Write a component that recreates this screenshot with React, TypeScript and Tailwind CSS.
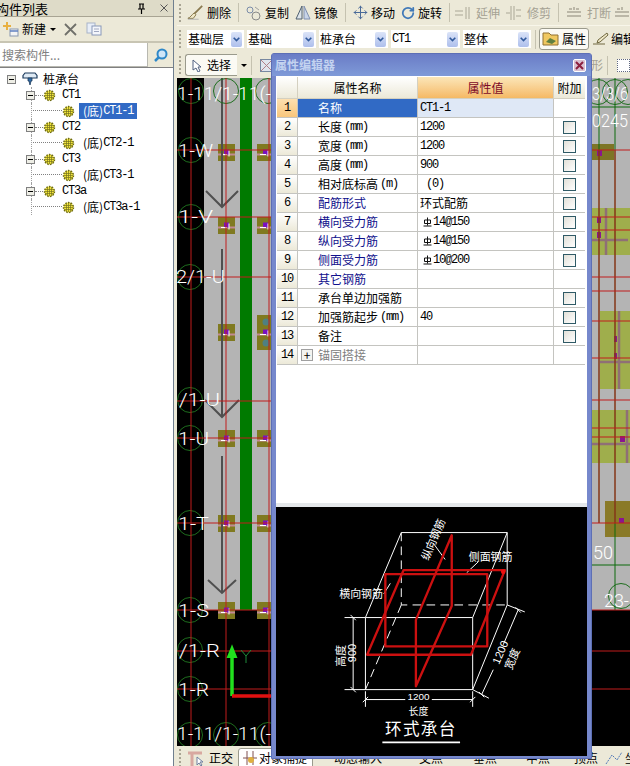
import { Move, RotateCw } from 'lucide-react';

const sans = "font-['Noto_Sans_CJK_SC','Noto_Sans_CJK_JP',sans-serif]";
const mono = "font-['Liberation_Mono',monospace] text-[12px] tracking-[-1.2px]";

const tree = [
  { label: '桩承台', depth: 0 },
  { label: 'CT1', depth: 1 },
  { label: '(底)CT1-1', depth: 2, selected: true },
  { label: 'CT2', depth: 1 },
  { label: '(底)CT2-1', depth: 2 },
  { label: 'CT3', depth: 1 },
  { label: '(底)CT3-1', depth: 2 },
  { label: 'CT3a', depth: 1 },
  { label: '(底)CT3a-1', depth: 2 },
];

const rows = [
  { name: '名称', value: 'CT1-1', check: false },
  { name: '长度', unit: '(mm)', value: '1200', check: true },
  { name: '宽度', unit: '(mm)', value: '1200', check: true },
  { name: '高度', unit: '(mm)', value: '900', check: true },
  { name: '相对底标高', unit: '(m)', value: ' (0)', check: true },
  { name: '配筋形式', value: '环式配筋', check: true, blue: true, cjk: true },
  { name: '横向受力筋', value: '14@150', check: true, blue: true, rebar: true },
  { name: '纵向受力筋', value: '14@150', check: true, blue: true, rebar: true },
  { name: '侧面受力筋', value: '10@200', check: true, blue: true, rebar: true },
  { name: '其它钢筋', value: '', check: false, blue: true },
  { name: '承台单边加强筋', value: '', check: true },
  { name: '加强筋起步', unit: '(mm)', value: '40', check: true },
  { name: '备注', value: '', check: true },
  { name: '锚固搭接', value: '', check: false, group: true },
];

function Grip() {
  return <div className="w-[3px] h-[18px] mx-[2px] shrink-0 border-l-2 border-dotted border-[#a8a493]" />;
}

function Sep() {
  return <div className="w-px h-[19px] mx-[4px] shrink-0 bg-[#c5c2b0]" />;
}

function Gear() {
  return (
    <svg width="13" height="13" viewBox="0 0 13 13" className="shrink-0">
      <circle cx="6.5" cy="6.5" r="5" fill="#f3e63c" stroke="#6d6a12" strokeWidth="1.4" strokeDasharray="1.6 1.2" />
      <path d="M2 4.5h9M2 6.5h9M2 8.5h9M4.5 2v9M6.5 2v9M8.5 2v9" stroke="#75721c" strokeWidth="0.7" />
    </svg>
  );
}

function Expander({ sign = true }: { sign?: boolean }) {
  return (
    <span className="w-[9px] h-[9px] shrink-0 border border-[#808080] bg-[#eeeee6] flex items-center justify-center relative z-10">
      <span className="w-[5px] h-px bg-black" />
      {!sign && <span className="absolute w-px h-[5px] bg-black" />}
    </span>
  );
}

function TreeRow({ label, depth, selected }: { label: string; depth: number; selected?: boolean }) {
  return (
    <div className="h-[16px] flex items-center relative">
      {depth === 0 && (
        <div className="flex items-center pl-[7px]">
          <Expander />
          <svg width="16" height="14" viewBox="0 0 16 14" className="ml-[6px] shrink-0">
            <path d="M1 3.5 3 1h10l2 2.5V6H1z" fill="#dfeaf4" stroke="#1c3a5c" strokeWidth="1.2" />
            <path d="M6 6h4v3H9l-1 4-1-4H6z" fill="#2f6ca8" stroke="#1c3a5c" strokeWidth="0.8" />
          </svg>
          <span className="ml-[5px] text-[12px] leading-none text-black">{label}</span>
        </div>
      )}
      {depth === 1 && (
        <div className="flex items-center pl-[26px]">
          <Expander />
          <span className="w-[8px] border-t border-dotted border-[#808080]" />
          <Gear />
          <span className={`ml-[6px] text-black ${mono}`}>{label}</span>
        </div>
      )}
      {depth === 2 && (
        <div className="flex items-center pl-[31px]">
          <span className="w-[31px] h-[8px] -mt-[8px] border-l border-b border-dotted border-[#808080] shrink-0" />
          <Gear />
          <span className={`ml-[4px] h-[16px] px-[4px] flex items-center ${selected ? 'bg-[#316ac5] text-white' : 'text-black'}`}>
            <span className="text-[12px]">(底)</span>
            <span className={mono}>{label.slice(3)}</span>
          </span>
        </div>
      )}
      {depth > 0 && (
        <span className="absolute left-[31px] top-0 bottom-0 border-l border-dotted border-[#a0a0a0]" />
      )}
    </div>
  );
}

function Tool({ icon, label, dim }: { icon: React.ReactNode; label: string; dim?: boolean }) {
  return (
    <div className={`flex items-center gap-[3px] shrink-0 px-[3px] text-[12px] ${dim ? 'text-[#a5a294]' : 'text-black'}`}>
      {icon}
      <span>{label}</span>
    </div>
  );
}

function ComboBox({ text, w, latin }: { text: string; w: string; latin?: boolean }) {
  return (
    <div className={`h-[18px] flex items-center justify-between bg-white pl-[1px] pr-[2px] mr-[3px] shrink-0 ${w}`}>
      <span className={latin ? mono : 'text-[12px]'}>{text}</span>
      <span className="w-[11px] h-[15px] rounded-[2px] bg-gradient-to-b from-[#dbe4f8] to-[#aebfec] flex items-center justify-center">
        <svg width="7" height="5" viewBox="0 0 7 5">
          <path d="M.7.7 3.5 3.6 6.3.7" fill="none" stroke="#315a9c" strokeWidth="1.6" />
        </svg>
      </span>
    </div>
  );
}

function Checkbox() {
  return <span className="w-[13px] h-[13px] border border-[#2f5a66] bg-gradient-to-br from-[#e2e0d8] to-white block" />;
}

function RebarGlyph() {
  return (
    <svg width="9" height="10" viewBox="0 0 9 10" className="inline-block mr-[1px]">
      <path d="M1.5 3h6v3.500h-6zM4.500.5v8M.5 9h8" fill="none" stroke="#111" strokeWidth="1" />
    </svg>
  );
}

function PropertyGrid() {
  return (
    <div className="ml-px mt-px grid grid-cols-[21px_120px_136px_31px] text-[12px] text-black">
      <div className="h-[22px] bg-gradient-to-b from-white to-[#ece9d8] border-r border-b border-[#d4d0c0]" />
      <div className="h-[22px] flex items-center justify-center bg-gradient-to-b from-white to-[#ece9d8] border-r border-b border-[#d4d0c0]">属性名称</div>
      <div className="h-[22px] flex items-center justify-center bg-gradient-to-b from-[#fbe6b8] to-[#f5b964] border-r border-b border-[#d4d0c0] text-[#7c0a28]">属性值</div>
      <div className="h-[22px] flex items-center justify-center bg-gradient-to-b from-white to-[#ece9d8] border-b border-[#d4d0c0]">附加</div>
      {rows.map((r, i) => (
        <div key={r.name} className="contents">
          <div className={`h-[19px] flex items-center justify-center border-r border-b border-[#c4c4c0] ${mono} ${i === 0 ? 'bg-gradient-to-b from-[#fde0b0] to-[#f8c67c]' : 'bg-gradient-to-b from-white to-[#ece9d8]'}`}>
            {i + 1}
          </div>
          <div className={`h-[19px] flex items-center border-r border-b border-[#c4c4c0] relative pl-[20px] ${i === 0 ? 'bg-[#316ac5] text-white' : r.group ? 'text-[#808080]' : r.blue ? 'text-[#10108c]' : ''}`}>
            {r.group && (
              <span className="absolute left-[3px] top-[3px] w-[12px] h-[12px] border border-[#a0a0a0] bg-[#f4f4f0] flex items-center justify-center text-black text-[12px] leading-none">+</span>
            )}
            <span>{r.name}</span>
            {r.unit && <span className={`ml-[2px] ${mono}`}>{r.unit}</span>}
          </div>
          <div className={`h-[19px] flex items-center border-r border-b border-[#c4c4c0] pl-[2px] whitespace-pre ${i === 0 ? 'bg-[#dfe8f6]' : ''}`}>
            {r.rebar && <span className="w-[3px]" />}
            {r.rebar && <RebarGlyph />}
            <span className={r.cjk ? '' : mono}>{r.value}</span>
          </div>
          <div className="h-[19px] flex items-center justify-center border-b border-[#c4c4c0]">
            {r.check && <Checkbox />}
          </div>
        </div>
      ))}
    </div>
  );
}

function RingCapDiagram() {
  const t = { fill: '#fff', fontSize: 33, fontFamily: "'Noto Sans CJK SC', sans-serif" };
  return (
    <svg viewBox="18 20 932 750" className="w-full h-full block">
      <g stroke="#fff" strokeWidth="3" fill="none">
        <path d="M285 353H608V570H285zM393 97H712L608 353M393 97 285 353M712 97V315L608 570" />
        <path d="M393 97V315H712M393 315 285 570" strokeDasharray="26 16" />
        <path d="M222 353H285M222 570H285M248 353V570M240 345l16 16M240 562l16 16" />
        <path d="M285 575V622M608 575V622M285 600H405M485 600H608M277 608l16-16M600 608l16-16" />
        <path d="M712 315 765 336M608 570 657 596M745 330 700 435M670 510 635 585M737 322l16 16M627 577l16 16" />
        <path d="M340 282 360 250M490 130 525 178M590 218 625 185" />
      </g>
      <g stroke="#cc1010" strokeWidth="7" fill="none" strokeLinejoin="round">
        <path d="M345 222H652V440H345z" />
        <path d="M400 210H705L603 465H290z" />
        <path d="M545 105V318L437 560V360z" />
      </g>
      <circle cx="700" cy="215" r="7" fill="#f01010" />
      <g {...t} textAnchor="middle">
        <text x="272" y="294">横向钢筋</text>
        <text x="662" y="184">侧面钢筋</text>
        <text x="445" y="602" fontSize="30" fontFamily="'Liberation Sans', sans-serif">1200</text>
        <text x="445" y="648" fontSize="30">长度</text>
        <text transform="translate(490 118) rotate(-67)" y="11">纵向钢筋</text>
        <text transform="translate(258 460) rotate(-90)" fontFamily="'Liberation Sans', sans-serif">900</text>
        <text transform="translate(224 468) rotate(-90)">高度</text>
        <text transform="translate(702 462) rotate(-67)" fontFamily="'Liberation Sans', sans-serif">1200</text>
        <text transform="translate(738 482) rotate(-67)">宽度</text>
        <text x="452" y="706" fontSize="50" letterSpacing="4">环式承台</text>
      </g>
      <path d="M336 729H570" stroke="#fff" strokeWidth="5" />
    </svg>
  );
}

const capsLeft = [
  [218, 144, 17, 17], [218, 217, 17, 17], [218, 324, 17, 17], [218, 430, 17, 17], [218, 515, 17, 17], [218, 602, 17, 17],
  [257, 144, 17, 17], [257, 217, 17, 17], [257, 315, 17, 35], [257, 430, 17, 17], [257, 515, 17, 17], [257, 602, 17, 17],
];

const labels = [
  ['1-W', 178, 157, 35], ['1-V', 178, 223, 35], ['2/1-U', 176, 283, 49], ['/1-U', 179, 406, 41], ['1-U', 178, 445, 31],
  ['1-T', 178, 530, 31], ['1-S', 178, 617, 31], ['/1-R', 179, 657, 41], ['1-R', 178, 696, 31],
] as const;

function CadCanvas() {
  const redH = [150, 217, 277, 401, 438, 523, 610, 651, 689];
  const redHRight = [150, 217, 230, 277, 291, 321, 358, 400, 428, 437, 523, 610, 651, 689];
  const circles = [[191, 91], [226, 91], [268, 91], [191, 150], [191, 217], [190, 277], [190, 400], [190, 438], [190, 523], [190, 610], [190, 650], [190, 689], [190, 735], [226, 735], [268, 735], [598, 92], [615, 92], [628, 92], [621, 596]];
  return (
    <svg viewBox="177 78 453 668" className="w-full h-full block bg-black">
      <rect x="204" y="78" width="426" height="532" fill="#b4b4b4" />
      <rect x="240" y="78" width="12" height="532" fill="#007a00" />
      <rect x="592" y="208" width="38" height="47" fill="#9fae4c" />
      <rect x="600" y="311" width="30" height="78" fill="#9fae4c" />
      <rect x="592" y="410" width="38" height="53" fill="#9fae4c" />
      <rect x="592" y="144" width="22" height="16" fill="#7d7526" />
      <rect x="605" y="501" width="25" height="36" fill="#8a7a28" />
      <g stroke="#8f6f76" strokeWidth="2.5">
        <path d="M606 208V255M592 240H628M619 311V389M600 362H630M592 444H630M627 410V463" />
      </g>
      {capsLeft.map(([x, y, w, h]) => (
        <g key={`${x}-${y}`}>
          <rect x={x} y={y} width={w} height={h} fill="#807a20" />
          {h > 17 ? (
            <>
              <circle cx={x + 9} cy={y + 7} r="3.500" fill="#4f8080" />
              <circle cx={x + 9} cy={y + 28} r="3.500" fill="#4f8080" />
            </>
          ) : null}
          <rect x={x} y={y + h / 2 + 1} width={w} height="2" fill="#c28a94" />
          <rect x={x + 6} y={y + h / 2 - 3} width="5" height="5" fill="#7a10c0" />
          <path d={`M${x + 3} ${y + h / 2 + 2}h6M${x + 11} ${y + h / 2 - 2}v6`} stroke="#fff" strokeWidth="1" />
        </g>
      ))}
      <g fill="#8a1590">
        <rect x="597" y="150" width="5" height="6" />
        <rect x="597" y="217" width="4" height="6" />
        <rect x="597" y="232" width="4" height="6" />
        <rect x="614" y="336" width="3" height="6" />
        <rect x="614" y="353" width="3" height="6" />
        <rect x="620" y="436" width="5" height="6" />
        <rect x="619" y="518" width="5" height="5" />
      </g>
      <g stroke="#4f4f4f" strokeWidth="2" fill="none">
        <path d="M222 78V207M206 191l16 16 16-16M222 249V417M205 400l17 17 17-17M222 456V593M208 580l14 13 14-13" />
      </g>
      <g stroke="#1e6e1e" strokeWidth="1" fill="none">
        {circles.map(([cx, cy]) => (
          <circle key={`${cx}-${cy}`} cx={cx} cy={cy} r="12.500" />
        ))}
      </g>
      <path d="M599 78V523M615 78V610M592 107H630M592 565H630" stroke="#0d6a0d" strokeWidth="1" />
      <g stroke="#c01c1c" strokeWidth="1">
        <path d="M191 78V746M226 78V746M269 78V746" />
        {redH.map((y) => (
          <path key={y} d={`M177 ${y}H272`} />
        ))}
        {redHRight.map((y) => (
          <path key={y} d={`M590 ${y}H630`} />
        ))}
        <path d="M599 150V523M615 150V523" />
      </g>
      <g fill="#fff" fontFamily="Roboto, 'Liberation Sans', sans-serif" fontWeight="300" fontSize="18">
        <text x="177" y="100" textLength="94" lengthAdjust="spacingAndGlyphs">1-11/1-11(-</text>
        <text x="177" y="740" textLength="94" lengthAdjust="spacingAndGlyphs">1-11/1-11(-</text>
        <text x="592" y="127" textLength="36" lengthAdjust="spacingAndGlyphs">0245</text>
        <text x="592" y="100" textLength="36" lengthAdjust="spacingAndGlyphs">3/3/6</text>
        <text x="593" y="559" textLength="20" lengthAdjust="spacingAndGlyphs">50</text>
        <text x="604" y="607" textLength="25" lengthAdjust="spacingAndGlyphs">23-</text>
        {labels.map(([s, x, y, w]) => (
          <text key={s} x={x} y={y} textLength={w} lengthAdjust="spacingAndGlyphs">{s}</text>
        ))}
      </g>
      <path d="M232 696V654" stroke="#22e01e" strokeWidth="3.500" />
      <path d="M232 647l-4 10h8z" fill="#22e01e" stroke="#22e01e" strokeWidth="2" />
      <path d="M232 696H272" stroke="#e01010" strokeWidth="3.500" />
      <path d="M241 650l5 6 5-6M246 656v7" fill="none" stroke="#1e8a3a" strokeWidth="1" />
    </svg>
  );
}

export default function App() {
  return (
    <div className={`relative w-[630px] h-[766px] overflow-hidden flex bg-[#ece9d8] text-black ${sans}`}>
      {/* Left panel */}
      <aside className="w-[174px] h-full flex flex-col shrink-0 border-r border-[#6f7f8f]">
        <div className="h-[17px] flex items-center bg-[#dedbc8] border-b border-[#a8a493] text-[13px] overflow-hidden">
          <span className="-ml-[4px] flex-1 leading-none">构件列表</span>
          <svg width="9" height="11" viewBox="0 0 9 11" className="mr-[14px]">
            <path d="M2 1h5M3 1v5M6 1v5M1 6h7M4.500 6v5" stroke="#000" strokeWidth="1.200" fill="none" />
          </svg>
          <svg width="8" height="8" viewBox="0 0 8 8" className="mr-[5px]">
            <path d="M.5.500l7 7M7.500.500l-7 7" stroke="#555" strokeWidth="1" />
          </svg>
        </div>
        <div className="h-[26px] flex items-center pl-[2px] text-[12px] border-b-2 border-[#c8c5b3]">
          <svg width="17" height="16" viewBox="0 0 17 16" className="shrink-0">
            <path d="M1 4h3V1h2v3h3v2H6v3H4V6H1z" fill="#e8b040" />
            <rect x="8" y="8" width="8" height="7" fill="#f4f4f4" stroke="#8898b0" />
            <path d="M8 10h8" stroke="#6080c0" strokeWidth="1.500" />
          </svg>
          <span className="ml-[3px]">新建</span>
          <span className="ml-[4px] w-0 h-0 border-x-[3px] border-t-[3px] border-x-transparent border-t-black" />
          <svg width="13" height="13" viewBox="0 0 13 13" className="ml-[8px]">
            <path d="M1 1l11 11M12 1 1 12" stroke="#70706a" strokeWidth="1.800" />
          </svg>
          <svg width="16" height="14" viewBox="0 0 16 14" className="ml-[9px]">
            <rect x="1" y="1" width="8" height="10" fill="#e8eef8" stroke="#a8b4c8" />
            <rect x="6" y="4" width="9" height="9" fill="#f4f6fb" stroke="#8898b8" />
            <path d="M8 7h5M8 9.500h5" stroke="#a0a8c0" />
          </svg>
        </div>
        <div className="h-[25px] flex items-stretch border-b border-[#808080]">
          <div className="w-[148px] bg-white border-r border-b border-[#b8b8b0] text-[12px] text-[#808080] flex items-center pl-[2px]">搜索构件...</div>
          <div className="flex-1 flex items-center justify-center">
            <svg width="15" height="15" viewBox="0 0 15 15">
              <circle cx="9" cy="6" r="4.500" fill="#cfe6f8" stroke="#2f88c8" strokeWidth="2" />
              <path d="M5.500 9.500 2 13" stroke="#2f88c8" strokeWidth="2.500" />
            </svg>
          </div>
        </div>
        <div className="flex-1 bg-white pt-[3px]">
          {tree.map((n) => (
            <TreeRow key={n.label} {...n} />
          ))}
        </div>
      </aside>
      <div className="w-[3px] shrink-0" />

      {/* Main column */}
      <div className="flex-1 min-w-0 flex flex-col">
        <div className="h-[26px] flex items-center overflow-hidden border-b border-[#f8f6ea]">
          <Grip />
          <Tool
            label="删除"
            icon={
              <svg width="17" height="18" viewBox="0 0 19 18">
                <path d="M17 1 8 10" stroke="#8a7a50" strokeWidth="2" />
                <path d="M8 9l2 2-3 4H1c3-1 4-4 7-6z" fill="#f0e8c8" stroke="#807040" />
                <path d="M1 16h12" stroke="#b0b0b0" />
              </svg>
            }
          />
          <Sep />
          <Tool
            label="复制"
            icon={
              <svg width="16" height="16" viewBox="0 0 16 16" fill="none" stroke="#7a8ca8">
                <circle cx="4" cy="5" r="3" />
                <circle cx="10" cy="11" r="4" stroke="#8a8a8a" />
                <path d="M9 2l4 3" stroke="#a0a0a0" />
              </svg>
            }
          />
          <span className="w-[5px]" />
          <Tool
            label="镜像"
            icon={
              <svg width="16" height="15" viewBox="0 0 16 15" fill="none">
                <path d="M7 1v13H1z" stroke="#506070" fill="#dde4ea" />
                <path d="M9 1v13h6z" stroke="#8090b0" fill="#c8d4e8" />
              </svg>
            }
          />
          <Sep />
          <Tool label="移动" icon={<Move size={15} strokeWidth={1.6} className="text-[#4a6a98]" />} />
          <span className="w-[6px]" />
          <Tool label="旋转" icon={<RotateCw size={14} strokeWidth={3} className="text-[#3f78b8]" />} />
          <Sep />
          <span className="-ml-[2px]" />
          <Tool
            dim
            label="延伸"
            icon={
              <svg width="15" height="12" viewBox="0 0 15 12" className="mr-[3px]">
                <path d="M0 4h8M0 8h8M11 0v12M14 0v12" stroke="#aaa796" />
              </svg>
            }
          />
          <span className="w-[2px]" />
          <Tool
            dim
            label="修剪"
            icon={
              <svg width="15" height="14" viewBox="0 0 15 14" className="mr-[3px]">
                <path d="M5 0v14M8 0v14M0 7h4M10 4h5M10 10h5" stroke="#aaa796" />
              </svg>
            }
          />
          <Sep />
          <Tool
            dim
            label="打断"
            icon={
              <svg width="16" height="13" viewBox="0 0 16 13" className="mr-[2px]">
                <path d="M1 6h14M1 10h14M8 1v3M3 3h3M10 3h3" stroke="#aaa796" strokeWidth="1.500" />
              </svg>
            }
          />
          <span className="w-[3px]" />
          <svg width="16" height="13" viewBox="0 0 16 13" className="shrink-0">
            <path d="M1 6h14M1 10h14M8 1v3M3 3h3" stroke="#aaa796" strokeWidth="1.500" />
          </svg>
        </div>

        <div className="h-[26px] flex items-center overflow-hidden">
          <Grip />
          <span className="w-[3px] shrink-0" />
          <ComboBox text="基础层" w="w-[57px]" />
          <ComboBox text="基础" w="w-[69px]" />
          <ComboBox text="桩承台" w="w-[69px]" />
          <ComboBox text="CT1" w="w-[69px]" latin />
          <ComboBox text="整体" w="w-[68px]" />
          <div className="w-px h-[19px] ml-px mr-[3px] shrink-0 bg-[#c5c2b0]" />
          <div className="h-[22px] w-[50px] shrink-0 flex items-center justify-center gap-[3px] bg-[#fbfaf4] border border-[#9a9a8c] rounded-[3px] text-[12px]">
            <svg width="17" height="14" viewBox="0 0 17 14">
              <path d="M1 1h6l2 2h7v10H1z" fill="#f0c860" stroke="#907030" />
              <path d="M4 10l4-4 6 3-4 3z" fill="#608040" />
            </svg>
            <span>属性</span>
          </div>
          <span className="w-[3px] shrink-0" />
          <svg width="17" height="14" viewBox="0 0 17 14" className="shrink-0">
            <path d="M15 1 6 8l-1 3 3-1 8-7zM1 12h12" fill="#f0e8c8" stroke="#706840" />
          </svg>
          <span className="ml-[2px] text-[12px] shrink-0">编辑</span>
        </div>

        <div className="h-[26px] flex items-center overflow-hidden">
          <Grip />
          <span className="w-[1px]" />
          <div className="h-[22px] w-[52px] shrink-0 flex items-center justify-center gap-[5px] bg-[#fbfaf4] border border-r-0 border-[#9a9a8c] rounded-l-[3px] text-[12px]">
            <svg width="10" height="13" viewBox="0 0 10 13">
              <path d="M1 1v10l3-2 2 4 2-1-2-4h3z" fill="#fff" stroke="#506080" />
            </svg>
            <span>选择</span>
          </div>
          <span className="ml-[4px] w-0 h-0 border-x-[3px] border-t-[3px] border-x-transparent border-t-black shrink-0" />
          <Sep />
          <svg width="13" height="13" viewBox="0 0 13 13" className="ml-[4px] shrink-0">
            <rect x=".5" y=".5" width="12" height="12" fill="#e0e4ee" stroke="#7888a0" />
            <path d="M1 1l11 11M12 1 1 12" stroke="#b08088" />
          </svg>
          <span className="ml-[318px] text-[12px] text-[#a5a294] shrink-0">形</span>
          <Sep />
          <span className="ml-[5px] w-[13px] h-[13px] border border-dotted border-[#606880] bg-white shrink-0" />
        </div>

        <div className="flex-1 min-h-0">
          <CadCanvas />
        </div>

        <div className="h-[20px] pt-[4px] flex items-center overflow-hidden text-[12px] whitespace-nowrap">
          <Grip />
          <svg width="20" height="17" viewBox="0 0 20 17" className="ml-[2px] shrink-0">
            <path d="M2 3h14M6 3v13" stroke="#d8a8a0" strokeWidth="3" />
            <path d="M11 7v8l2-2 2 3 1-1-2-3h3z" fill="#fff" stroke="#7080a0" />
          </svg>
          <span className="ml-[3px] shrink-0">正交</span>
          <div className="ml-[5px] h-[20px] w-[75px] shrink-0 flex items-center pl-[4px] gap-[2px] bg-white border border-[#9a9a8c] rounded-t-[3px]">
            <svg width="14" height="14" viewBox="0 0 14 14">
              <path d="M4 0v14M10 0v14M0 7h14" stroke="#805050" />
              <circle cx="8" cy="9" r="3" fill="#e0b040" />
            </svg>
            <span>对象捕捉</span>
          </div>
          <span className="ml-[21px] shrink-0">动态输入</span>
          <span className="ml-[37px] shrink-0">交点</span>
          <span className="ml-[30px] shrink-0">垂点</span>
          <span className="ml-[29px] shrink-0">中点</span>
          <span className="ml-[24px] shrink-0">顶点</span>
          <svg width="20" height="16" viewBox="0 0 20 16" className="ml-[6px] shrink-0">
            <path d="M2 14 8 5l5 5 5-8" fill="none" stroke="#5078b8" strokeDasharray="2 1" />
          </svg>
          <span className="ml-[1px] shrink-0">坐标</span>
        </div>
      </div>

      {/* Property editor dialog */}
      <div className="absolute left-[271px] top-[53px] w-[321px] h-[706px] flex flex-col bg-[#7688cc] border border-[#5d6fb5] rounded-t-[3px]">
        <div className="h-[22px] shrink-0 flex items-center justify-between pl-[3px] pr-[5px] bg-gradient-to-b from-[#6a7cc6] to-[#7f9ad8] text-[12px] font-bold text-[#c3d3f0]">
          <span>属性编辑器</span>
          <span className="w-[13px] h-[13px] bg-[#d9c0d0] border border-white rounded-[2px] flex items-center justify-center">
            <svg width="9" height="9" viewBox="0 0 9 9">
              <path d="M1 1l7 7M8 1 1 8" stroke="#8c1f3f" strokeWidth="2" />
            </svg>
          </span>
        </div>
        <div className="flex-1 min-h-0 mx-[4px] mb-[2px] bg-white flex flex-col">
          <div className="flex-1 min-h-0">
            <PropertyGrid />
          </div>
          <div className="h-[253px] shrink-0 border-t-[4px] border-[#e4e7ea] bg-black">
            <RingCapDiagram />
          </div>
        </div>
      </div>
    </div>
  );
}
